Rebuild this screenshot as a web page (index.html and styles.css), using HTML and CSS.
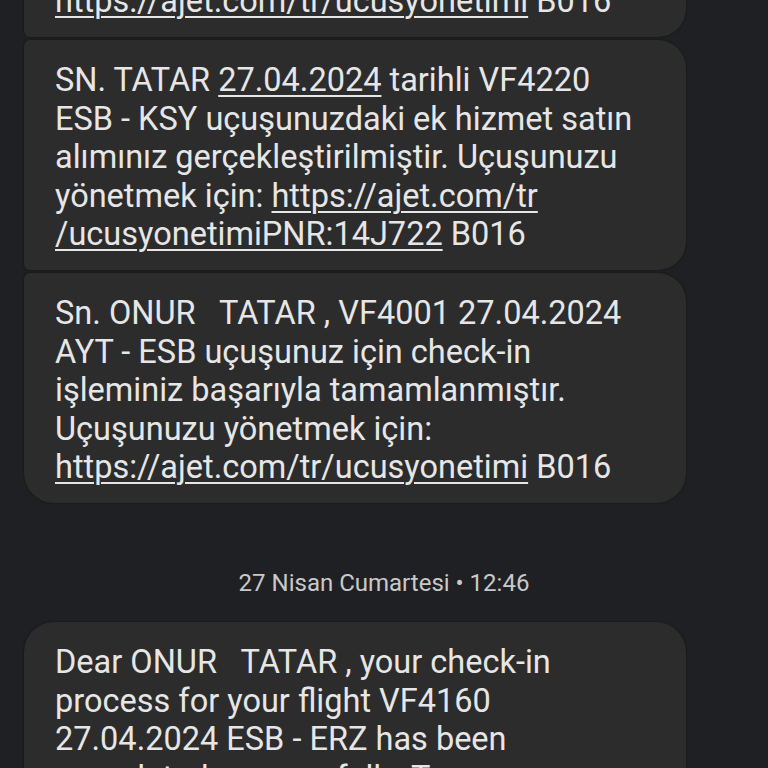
FILE: index.html
```html
<!DOCTYPE html>
<html lang="tr">
<head>
<meta charset="utf-8">
<title>Mesajlar</title>
<link rel="stylesheet" href="styles.css">
</head>
<body>
<main class="screen">
  <div class="thread">
    <div class="group">
      <div class="bubble first">Sn. ONUR&nbsp;&nbsp; TATAR , VF4220 27.04.2024<br>ESB - KSY uçuşunuz için check-in<br>işleminiz başarıyla tamamlanmıştır.<br>Uçuşunuzu yönetmek için:<br><a class="link" href="#">https://ajet.com/tr/ucusyonetimi</a> B016</div>
      <div class="bubble middle">SN. TATAR <a class="link" href="#">27.04.2024</a> tarihli VF4220<br>ESB - KSY uçuşunuzdaki ek hizmet satın<br>alımınız gerçekleştirilmiştir. Uçuşunuzu<br>yönetmek için: <a class="link" href="#">https://ajet.com/tr<br>/ucusyonetimiPNR:14J722</a> B016</div>
      <div class="bubble last">Sn. ONUR&nbsp;&nbsp; TATAR , VF4001 27.04.2024<br>AYT - ESB uçuşunuz için check-in<br>işleminiz başarıyla tamamlanmıştır.<br>Uçuşunuzu yönetmek için:<br><a class="link" href="#">https://ajet.com/tr/ucusyonetimi</a> B016</div>
    </div>
    <div class="date">27 Nisan Cumartesi • 12:46</div>
    <div class="group">
      <div class="bubble first">Dear ONUR&nbsp;&nbsp; TATAR , your check-in<br>process for your flight VF4160<br>27.04.2024 ESB - ERZ has been<br>completed successfully. To manage your<br>flight: <a class="link" href="#">https://ajet.com/en/managebooking</a></div>
    </div>
  </div>
</main>
</body>
</html>
```
FILE: styles.css
```css
html, body {
  margin: 0;
  padding: 0;
  background: #1f2023;
}
.screen {
  width: 768px;
  height: 768px;
  overflow: hidden;
  background: #1f2023;
  font-family: Roboto, "Noto Sans", sans-serif;
  color: #e6e6e6;
}
.thread {
  margin-top: -193px;
  display: flex;
  flex-direction: column;
}
.group {
  display: flex;
  flex-direction: column;
  gap: 3px;
  padding-left: 24px;
}
.bubble {
  width: 662px;
  box-sizing: border-box;
  background: #2c2c2c;
  padding: 21px 20px 16.5px 31px;
  font-size: 32.5px;
  line-height: 38.5px;
  border-radius: 6px 28px 28px 6px;
  white-space: nowrap;
  box-shadow: 0 0 2px rgba(0, 0, 0, 0.55);
}
.bubble.first {
  border-radius: 30px 30px 28px 6px;
}
.bubble.last {
  border-radius: 6px 28px 30px 30px;
}
.link {
  color: inherit;
  text-decoration: underline;
  text-decoration-thickness: 2px;
  text-underline-offset: 4px;
}
.date {
  margin: 64px 0 23px;
  text-align: center;
  font-size: 24px;
  line-height: 32px;
  color: #c9c9c9;
}
```
